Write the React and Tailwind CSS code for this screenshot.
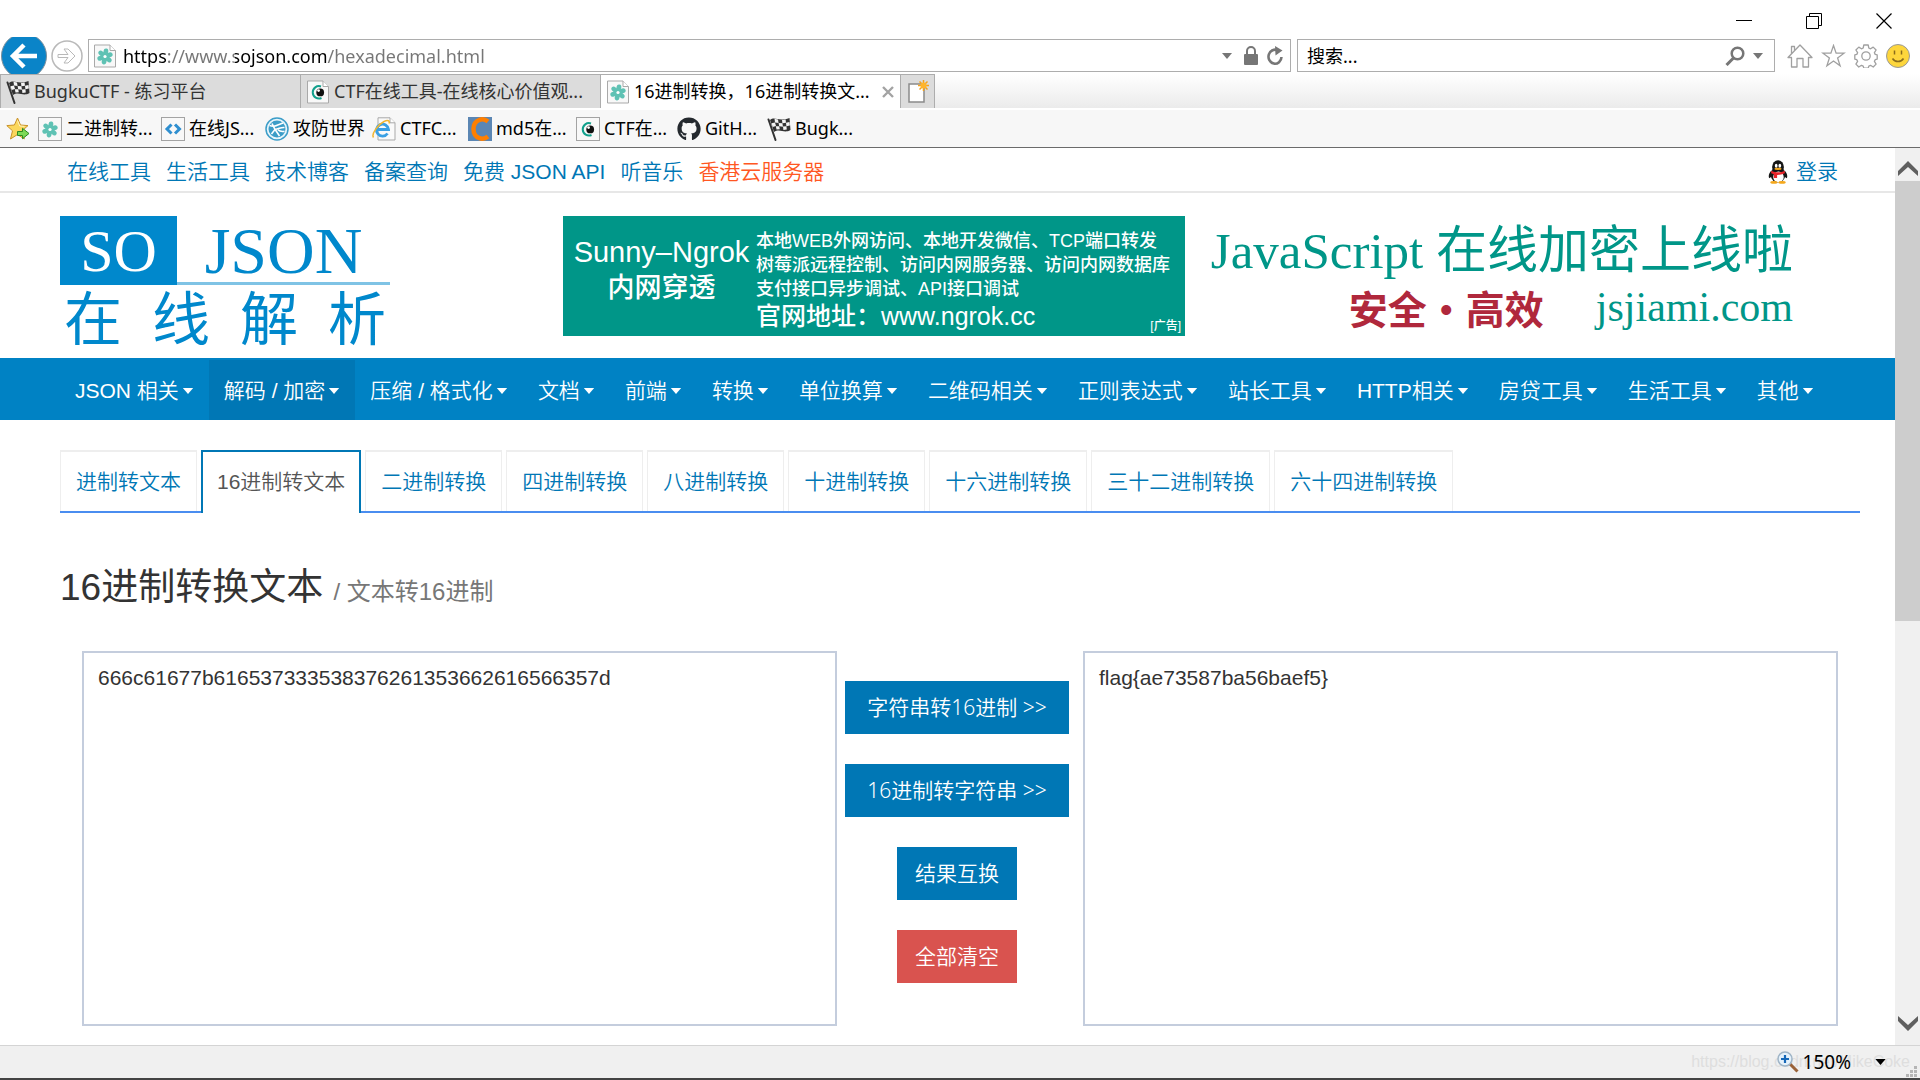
import React from "react";
import { FaGithub } from "react-icons/fa";

const UI = "font-['Noto_Sans','Noto_Sans_CJK_SC',sans-serif]";
const ARIAL = "font-['Liberation_Sans','Noto_Sans_CJK_SC',sans-serif] font-[350]";

/* ---------- icons ---------- */

function Flower() {
  return (
    <g>
      {[10, 70, 130, 190, 250, 310].map((a) => (
        <ellipse key={a} cx="12" cy="7.4" rx="2.4" ry="2.9" fill="#5fc2b4" transform={`rotate(${a} 12 12.5)`} />
      ))}
      <circle cx="12" cy="12.5" r="4.6" fill="#5fc2b4" />
      <circle cx="12" cy="12.5" r="1.6" fill="#fff" />
    </g>
  );
}

function Eye() {
  return (
    <g>
      <path d="M15 6.5A6.2 6.2 0 1 0 15.5 18" fill="none" stroke="#12a08c" strokeWidth="2" />
      <circle cx="14.2" cy="12.4" r="3.9" fill="#111" />
      <circle cx="12.6" cy="10.6" r="1.4" fill="#fff" />
    </g>
  );
}

function Chevrons() {
  return (
    <g fill="none" stroke="#2f8fd0" strokeWidth="3">
      <path d="M10.500 7.500 L6 12 L10.500 16.500" />
      <path d="M14 7.500 L18.500 12 L14 16.500" />
    </g>
  );
}

function DocIcon({ children }) {
  return (
    <svg viewBox="0 0 24 24" className="size-6 shrink-0" aria-hidden="true">
      <path d="M1.5 1H17l5.5 5.5V23h-21z" fill="#f8f8f8" stroke="#a9a9a9" />
      <path d="M17 1v5.5h5.5" fill="#fff" stroke="#a9a9a9" />
      {children}
    </svg>
  );
}

function BoxIcon({ children }) {
  return (
    <svg viewBox="0 0 24 24" className="size-6 shrink-0" aria-hidden="true">
      <rect x="0.5" y="0.5" width="23" height="23" fill="#f8f8f8" stroke="#a3a3a3" />
      {children}
    </svg>
  );
}

function FlagIcon() {
  return (
    <svg viewBox="0 0 24 24" className="size-6 shrink-0" aria-hidden="true">
      <path d="M1.500 2.500 L8.500 23" stroke="#333" strokeWidth="2" strokeLinecap="round" />
      <path d="M3 3 C8 -1 11 5 22.500 1 L23.500 13 C17 17 13 11 7 15 Z" fill="#333" />
      <path
        d="M7.500 1.800 l3.500 .8 .6 3.500 -3.600 -.6z M15 2.800 l3.600 -.3 .4 3.300 -3.600 .4z M4.500 6.200 l3.500 -.8 1 3.500 -3.400 1z M11.600 6 l3.800 .3 .6 3.400 -3.800 -.5z M19 5.800 l3.500 -.8 .4 3.400 -3.500 .8z M8.800 9 l3.400 .3 .6 3 -3.300 .2z M16 9.600 l3.400 -.4 .4 3.200 -3.400 .6z"
        fill="#f4f4f4"
      />
    </svg>
  );
}

function StarAdd() {
  return (
    <svg viewBox="0 0 24 24" className="size-6 shrink-0" aria-hidden="true">
      <path d="M11.500 1l3 7 7.500 .6-5.700 5 2 8.400-6.800-4.500L4.500 22l2-8.200L.8 8.600l7.600-.6z" fill="#fbd75c" stroke="#c9922a" strokeLinejoin="round" />
      <path d="M11.500 3.500l2.200 5.500 4.800 .4" fill="none" stroke="#fff2bd" />
      <path d="M11.500 14.500h5v-3.200l6.500 5.200-6.500 5.200v-3.200h-5z" fill="#7ed957" stroke="#2d8a22" strokeLinejoin="round" />
    </svg>
  );
}

function GlobeIcon() {
  return (
    <svg viewBox="0 0 24 24" className="size-6 shrink-0" aria-hidden="true">
      <circle cx="12" cy="12" r="11" fill="#e9f6fc" stroke="#3c9dc8" strokeWidth="1.500" />
      <circle cx="12" cy="12" r="8.500" fill="#3c9dc8" />
      <path d="M4.500 8.500C9 10 11 9 18 6M7 6.500l3 6-3.500 4.500M10 12.500c4-.5 6-2.500 9.500-2M10.500 13l4 6M13 12.800c2 2 4 2 6.500 1.500" fill="none" stroke="#fff" strokeWidth="1.600" />
    </svg>
  );
}

function IeIcon() {
  return (
    <svg viewBox="0 0 24 24" className="size-6 shrink-0" aria-hidden="true">
      <path d="M6 .8h12l5 5V23H6z" fill="#fafafa" stroke="#a9a9a9" />
      <path d="M18 .8v5h5" fill="#fff" stroke="#a9a9a9" />
      <path d="M15.500 16.500A6 6 0 1 1 16.500 12.500H5.500" fill="none" stroke="#3aa0e4" strokeWidth="2.800" />
      <path d="M1.500 20.500C-1 17 6 7.500 12 4.500c4-1.800 6-.8 5 2" fill="none" stroke="#f2b632" strokeWidth="1.500" />
    </svg>
  );
}

function CIcon() {
  return (
    <svg viewBox="0 0 24 24" className="size-6 shrink-0" aria-hidden="true">
      <rect width="24" height="24" fill="#5b86b3" />
      <path d="M20 4.500C17.500 2.500 14 2 11.500 2.800C3.500 5.500 3.500 18.500 11.500 21.200C14 22 17.500 21.500 20 19.500" fill="none" stroke="#ff7f00" strokeWidth="4.500" />
    </svg>
  );
}

function Penguin() {
  return (
    <svg viewBox="0 0 22 26" className="h-6 w-5" aria-hidden="true">
      <path d="M4 11C1 14 0 18 1.500 20L4 18M18 11c3 3 4 7 2.500 9L18 18" fill="#151515" />
      <ellipse cx="11" cy="16" rx="8" ry="8.500" fill="#151515" />
      <ellipse cx="11" cy="7.500" rx="6.500" ry="7.500" fill="#151515" />
      <ellipse cx="11.500" cy="18.500" rx="5.800" ry="6" fill="#fff" />
      <ellipse cx="9" cy="6" rx="1.500" ry="2.200" fill="#fff" />
      <ellipse cx="13" cy="6" rx="1.500" ry="2.200" fill="#fff" />
      <ellipse cx="11" cy="9.500" rx="4" ry="1.300" fill="#f5a81c" />
      <path d="M3.500 11.500c5 2.500 10 2.500 15 0v3c-3.500 1.500-6 1.800-8.500 1.700v3.300H6.500v-4L3.500 14.500z" fill="#e8262c" />
      <ellipse cx="6.500" cy="24.500" rx="4" ry="1.500" fill="#f5a81c" />
      <ellipse cx="15.500" cy="24.500" rx="4" ry="1.500" fill="#f5a81c" />
    </svg>
  );
}

function Triangle({ className }) {
  return (
    <svg viewBox="0 0 12 7" className={className} aria-hidden="true">
      <path d="M0 0h12L6 7z" fill="currentColor" />
    </svg>
  );
}

/* ---------- browser chrome ---------- */

function WindowButtons() {
  return (
    <div className="flex h-[37px] items-center justify-end gap-[54px] pt-1 pr-7">
      <button aria-label="最小化">
        <svg viewBox="0 0 16 16" className="size-4"><path d="M0 7.500h16" stroke="#000" /></svg>
      </button>
      <button aria-label="还原">
        <svg viewBox="0 0 16 16" className="size-4" fill="none" stroke="#000">
          <path d="M.5 3.500h12v12H.5zM3.500 3.500v-3h12v12h-3" />
        </svg>
      </button>
      <button aria-label="关闭">
        <svg viewBox="0 0 16 16" className="size-4"><path d="M.5 .5l15 15M15.500 .5l-15 15" stroke="#000" strokeWidth="1.200" /></svg>
      </button>
    </div>
  );
}

function AddressRow() {
  return (
    <div className="flex h-[37px] items-center overflow-hidden pr-2.5 pl-px">
      <button aria-label="后退" className="-my-1 shrink-0">
        <svg viewBox="0 0 46 46" className="size-[46px]">
          <circle cx="23" cy="23" r="22.500" fill="#0a84c8" stroke="#7d8f9b" />
          <path d="M36 23H13M23 12L12 23l11 11" fill="none" stroke="#fff" strokeWidth="4.500" />
        </svg>
      </button>
      <button aria-label="前进" className="ml-1 shrink-0">
        <svg viewBox="0 0 32 32" className="size-8" fill="none" stroke="#b9b9b9">
          <circle cx="16" cy="16" r="15" strokeWidth="1.500" />
          <path d="M7 14.500h10l-4-5.500h4l7 7-7 7h-4l4-5.500H7z" />
        </svg>
      </button>
      <div className="ml-[5px] flex h-[33px] min-w-0 flex-1 items-center border border-[#adadad] bg-white pr-1.5 pl-1 text-[#767676]">
        <DocIcon><Flower /></DocIcon>
        <input
          aria-label="地址"
          defaultValue="https://www.sojson.com/hexadecimal.html"
          className={`${UI} ml-1.5 h-[30px] min-w-0 flex-1 bg-[linear-gradient(to_right,#000_0_45px,#767676_45px_112px,#000_112px_204px,#767676_204px)] bg-clip-text text-[18px] text-transparent outline-none`}
        />
        <button aria-label="显示地址栏自动完成"><Triangle className="h-1.5 w-2.5" /></button>
        <svg viewBox="0 0 14 19" className="ml-3 h-[19px] w-3.5" aria-hidden="true">
          <path d="M3 9V5a4 4 0 0 1 8 0v4" fill="none" stroke="#767676" strokeWidth="2" />
          <rect y="8" width="14" height="11" rx="1" fill="#767676" />
        </svg>
        <button aria-label="刷新" className="ml-2">
          <svg viewBox="0 0 18 20" className="h-5 w-[18px]">
            <path d="M12 4.500A6.500 7 0 1 0 15.500 11" fill="none" stroke="#767676" strokeWidth="2.600" />
            <path d="M9 0l7.500 4.500L9.500 9.500z" fill="#767676" />
          </svg>
        </button>
      </div>
      <div className="ml-1.5 flex h-[33px] w-[478px] items-center border border-[#adadad] bg-white pr-[11px] pl-[9px] text-[#767676]">
        <input
          aria-label="搜索"
          placeholder="搜索..."
          className={`${UI} h-[30px] min-w-0 flex-1 text-[18px] placeholder:text-black outline-none`}
        />
        <button aria-label="开始搜索">
          <svg viewBox="0 0 20 20" className="size-5" fill="none" stroke="#767676">
            <circle cx="12.500" cy="7.500" r="5.800" strokeWidth="2.500" />
            <path d="M8.500 12L1.500 19" strokeWidth="3" />
          </svg>
        </button>
        <button aria-label="搜索选项" className="ml-2"><Triangle className="h-1.5 w-2.5" /></button>
      </div>
      <div className="ml-3 flex items-center gap-2 pt-px">
        <button aria-label="主页">
          <svg viewBox="0 0 26 24" className="h-6 w-[26px]" fill="#fff" stroke="#a0a0a0" strokeWidth="1.300" strokeLinejoin="round">
            <path d="M1 13.500L13 1l12 12.500h-3.500V23h-5.500v-8.500h-6V23H4.500v-9.500zM4.500 9.500V2.500h3v4" />
          </svg>
        </button>
        <button aria-label="收藏">
          <svg viewBox="0 0 25 24" className="h-6 w-[25px]" fill="#fff" stroke="#a0a0a0" strokeWidth="1.300">
            <path d="M12.500 1.500l2.600 7.700h8l-6.500 4.800 2.500 7.800-6.600-4.800-6.600 4.800 2.500-7.800L1.900 9.200h8z" />
          </svg>
        </button>
        <button aria-label="工具">
          <svg viewBox="0 0 24 24" className="size-6" fill="#fff" stroke="#a0a0a0" strokeWidth="1.300" strokeLinejoin="round">
            <path d="M9.800 1h4.400l.6 3 1.700 .8 2.700-1.700 2.900 2.900-1.700 2.700 .8 1.700 2 .5v4.200l-2 .6-.8 1.700 1.700 2.700-2.900 2.900-2.700-1.700-1.700 .8-.6 2H9.800l-.6-2-1.700-.8-2.700 1.700-2.900-2.900 1.700-2.700-.8-1.700-2-.6v-4.200l2-.5 .8-1.700L1.900 6l2.900-2.900 2.700 1.700 1.700-.8z" />
            <circle cx="12" cy="12" r="4.200" />
          </svg>
        </button>
        <button aria-label="反馈">
          <svg viewBox="0 0 24 24" className="size-6">
            <circle cx="12" cy="12" r="11.500" fill="#fdd63c" stroke="#999" />
            <path d="M8.500 6.500v4M15.500 6.500v4M6.500 14.500c2.500 4 8.500 4 11 0" fill="none" stroke="#8a6d1c" strokeWidth="1.500" />
          </svg>
        </button>
      </div>
    </div>
  );
}

function TabRow() {
  const tab = "flex w-[300px] items-center gap-1 overflow-hidden border-t border-l border-[#adadad] whitespace-nowrap";
  return (
    <div className={`${UI} flex h-[36px] border-b-2 border-white bg-linear-to-b from-white to-[#ebebeb] text-[18px]`} role="tablist">
      <button role="tab" className={`${tab} bg-[#dcdcdc] pl-[5px] text-[#333]`}>
        <FlagIcon />
        <span>BugkuCTF - 练习平台</span>
      </button>
      <button role="tab" className={`${tab} bg-[#dcdcdc] pl-[5px] text-[#333]`}>
        <DocIcon><Eye /></DocIcon>
        <span>CTF在线工具-在线核心价值观...</span>
      </button>
      <div role="tab" aria-selected="true" className={`${tab} bg-white pl-[5px] text-black`}>
        <DocIcon><Flower /></DocIcon>
        <span>16进制转换，16进制转换文...</span>
        <button aria-label="关闭选项卡" className="ml-auto pr-1.5">
          <svg viewBox="0 0 12 12" className="size-3"><path d="M1 1l10 10M11 1L1 11" stroke="#a3a3a3" strokeWidth="2.400" /></svg>
        </button>
      </div>
      <button aria-label="新建选项卡" className="flex w-[35px] items-center justify-center border-x border-t border-[#adadad] bg-[#dcdcdc]">
        <svg viewBox="0 0 22 24" className="h-6 w-[22px]">
          <rect x="2" y="4" width="15" height="18" fill="#fff" stroke="#8a8a8a" strokeWidth="1.500" />
          <path d="M16.500 0v11M11 5.500h11M12.500 1.500l8 8M20.500 1.500l-8 8" stroke="#f5a21a" strokeWidth="1.500" />
          <circle cx="16.500" cy="5.500" r="3" fill="#ffb52b" />
        </svg>
      </button>
    </div>
  );
}

const favorites = [
  { label: "二进制转...", w: "w-[123px]", icon: <BoxIcon><Flower /></BoxIcon> },
  { label: "在线JS...", w: "w-[104px]", icon: <BoxIcon><Chevrons /></BoxIcon> },
  { label: "攻防世界", w: "w-[107px]", icon: <GlobeIcon /> },
  { label: "CTFC...", w: "w-[96px]", icon: <IeIcon /> },
  { label: "md5在...", w: "w-[108px]", icon: <CIcon /> },
  { label: "CTF在...", w: "w-[101px]", icon: <BoxIcon><Eye /></BoxIcon> },
  { label: "GitH...", w: "w-[90px]", icon: <FaGithub className="size-6 shrink-0 text-[#24292e]" /> },
  { label: "Bugk...", w: "w-[90px]", icon: <FlagIcon /> },
];

function FavoritesBar() {
  return (
    <div className={`${UI} flex h-[38px] items-center border-b border-[#6b6b6b] bg-[#f7f7f7] pl-1.5 text-[18px] text-black`}>
      <button aria-label="添加到收藏夹栏" className="mr-2"><StarAdd /></button>
      {favorites.map((f) => (
        <a key={f.label} href="#" className={`${f.w} flex items-center gap-1 whitespace-nowrap`}>
          {f.icon}
          <span>{f.label}</span>
        </a>
      ))}
    </div>
  );
}

/* ---------- site ---------- */

const topLinks = ["在线工具", "生活工具", "技术博客", "备案查询", "免费 JSON API", "听音乐"];

function TopBar() {
  return (
    <div className="flex h-[45px] items-center gap-[15px] border-b-2 border-[#e7e7e7] pt-1 pr-[57px] pl-[67px] text-[21px] text-[#0077b5]">
      {topLinks.map((t) => (
        <a key={t} href="#">{t}</a>
      ))}
      <a href="#" className="text-[#ff5722]">香港云服务器</a>
      <a href="#" className="ml-auto flex items-center gap-2"><Penguin />登录</a>
    </div>
  );
}

function Logo() {
  return (
    <a href="#" aria-label="SO JSON 在线解析" className="block w-[330px] font-normal text-[#0088cc]">
      <div className="flex h-[69px] font-['Liberation_Serif',serif]">
        <div className="flex w-[117px] items-center justify-center bg-[#0088cc] text-[60px] leading-none text-white">SO</div>
        <div className="flex flex-1 items-center justify-center border-b-3 border-[#7fc3e5] pt-1 text-[66px] leading-none">JSON</div>
      </div>
      <div className="flex justify-between px-1 font-['Noto_Sans_CJK_SC',sans-serif] text-[58px] leading-[60px]">
        <span>在</span><span>线</span><span>解</span><span>析</span>
      </div>
    </a>
  );
}

function NgrokAd() {
  return (
    <a href="#" className="relative flex h-[120px] w-[622px] bg-[#009688] font-['Liberation_Sans','Noto_Sans_CJK_SC',sans-serif] font-medium whitespace-nowrap text-white">
      <div className="flex w-[193px] flex-col items-center pt-[18px] pl-1">
        <span className="text-[29px] leading-[36px]">Sunny–Ngrok</span>
        <span className="text-[27px] leading-[36px]">内网穿透</span>
      </div>
      <div className="flex flex-col pt-[13px] text-[18px] leading-[24px]">
        <span>本地WEB外网访问、本地开发微信、TCP端口转发</span>
        <span>树莓派远程控制、访问内网服务器、访问内网数据库</span>
        <span>支付接口异步调试、API接口调试</span>
        <span className="text-[25px] leading-[30px]">官网地址：www.ngrok.cc</span>
      </div>
      <span className="absolute right-1 bottom-0.5 text-[12px] leading-4">[广告]</span>
    </a>
  );
}

function JsAd() {
  return (
    <a href="#" className="ml-[25px] flex h-[120px] w-[583px] flex-col font-['Liberation_Serif','Noto_Sans_CJK_SC',serif] font-normal whitespace-nowrap text-[#009688]">
      <span className="text-right text-[51px] leading-[70px]">JavaScript 在线加密上线啦</span>
      <span className="flex items-center justify-end gap-[52px] leading-[42px]">
        <span className="font-['Noto_Sans_CJK_SC',sans-serif] text-[39px] font-bold text-[#b0283c]">安全·高效</span>
        <span className="text-[42px]">jsjiami.com</span>
      </span>
    </a>
  );
}

const navItems = [
  "JSON 相关", "解码 / 加密", "压缩 / 格式化", "文档", "前端", "转换", "单位换算",
  "二维码相关", "正则表达式", "站长工具", "HTTP相关", "房贷工具", "生活工具", "其他",
];

function Nav() {
  return (
    <nav className="flex h-[62px] bg-[#0082c4] pt-0.5 pl-[60px] text-[21px] text-white">
      {navItems.map((t, i) => (
        <button
          key={t}
          className={`flex items-center gap-[3px] px-[15px] pt-0.5 whitespace-nowrap ${i === 1 ? "bg-[#0077b5]" : ""}`}
        >
          {t}
          <Triangle className="h-1.5 w-3" />
        </button>
      ))}
    </nav>
  );
}

const converters = [
  "进制转文本", "16进制转文本", "二进制转换", "四进制转换", "八进制转换",
  "十进制转换", "十六进制转换", "三十二进制转换", "六十四进制转换",
];

function ConverterTabs() {
  return (
    <div className="mt-[30px] flex gap-1 border-b-2 border-[#4a8df0] text-[21px]">
      {converters.map((t, i) => (
        <a
          key={t}
          href="#"
          className={`flex items-center whitespace-nowrap ${
            i === 1
              ? "-mb-0.5 h-[63px] border-x-2 border-t-2 border-[#0077b5] bg-white px-3.5 pb-0.5 text-[#555]"
              : "h-[61px] border-x border-t-2 border-[#eee] px-[15px] text-[#0077b5]"
          }`}
        >
          {t}
        </a>
      ))}
    </div>
  );
}

function Converter() {
  const area = "h-[375px] min-w-0 flex-1 resize-none border-2 border-[#c4cddd] px-3.5 py-2.5 text-[21px] leading-[30px] text-[#333] outline-none";
  const button = "flex h-[53px] items-center px-[18px] text-[21px] whitespace-nowrap text-white";
  return (
    <div className="mt-9 flex px-[22px]">
      <textarea aria-label="输入" className={area} defaultValue="666c61677b616537333538376261353662616566357d" />
      <div className={`${UI} flex w-[246px] flex-col items-center gap-[30px] pt-[30px] pr-3.5 pl-2`}>
        <button className={`${button} w-full justify-center bg-[#0077b5]`}>字符串转16进制 &gt;&gt;</button>
        <button className={`${button} w-full justify-center bg-[#0077b5]`}>16进制转字符串 &gt;&gt;</button>
        <button className={`${button} bg-[#0077b5]`}>结果互换</button>
        <button className={`${button} bg-[#d9534f]`}>全部清空</button>
      </div>
      <textarea aria-label="结果" className={area} defaultValue="flag{ae73587ba56baef5}" />
    </div>
  );
}

function Scrollbar() {
  return (
    <div className="flex w-[25px] shrink-0 flex-col bg-[#f0f0f0]">
      <button aria-label="向上滚动" className="flex h-[33px] items-end justify-center pb-1">
        <svg viewBox="0 0 20 16" className="h-4 w-5"><path d="M0 15V10L10 0l10 10v5L10 6z" fill="#5f5f5f" /></svg>
      </button>
      <div className="flex-[441] bg-[#cdcdcd]" />
      <div className="flex-[394]" />
      <button aria-label="向下滚动" className="flex h-[30px] items-start justify-center">
        <svg viewBox="0 0 20 16" className="h-4 w-5"><path d="M0 1v5l10 10L20 6V1L10 10z" fill="#5f5f5f" /></svg>
      </button>
    </div>
  );
}

function StatusBar() {
  return (
    <footer className={`${UI} relative flex h-[35px] items-center justify-end border-t border-b-2 border-t-[#d4d4d4] border-b-[#444] bg-[#f0f0f0] text-black`}>
      <span className="absolute right-2.5 font-['Liberation_Sans',sans-serif] text-[16px] whitespace-nowrap text-[#dedede]">https://blog.csdn.net/MikeCoke</span>
      <button className="relative flex items-center gap-1 pr-[34px] text-[19px]">
        <svg viewBox="0 0 22 22" className="size-[22px]" aria-hidden="true">
          <path d="M13 13l7.500 7.500" stroke="#9a6238" strokeWidth="3" />
          <circle cx="8" cy="8" r="7" fill="#e4f1fb" stroke="#9fb4c6" strokeWidth="1.500" />
          <path d="M8 4v8M4 8h8" stroke="#1768b8" strokeWidth="2.200" />
        </svg>
        150%
        <Triangle className="ml-5 h-1.5 w-[11px]" />
      </button>
      <svg viewBox="0 0 12 12" className="absolute right-0.5 bottom-0 size-3" fill="#b5b5b5" aria-hidden="true">
        <path d="M8 0h3v3H8zM4 4h3v3H4zM8 4h3v3H8zM0 8h3v3H0zM4 8h3v3H4zM8 8h3v3H8z" />
      </svg>
    </footer>
  );
}

export default function App() {
  return (
    <div className="flex min-h-screen flex-col bg-white">
      <header>
        <WindowButtons />
        <AddressRow />
        <TabRow />
        <FavoritesBar />
      </header>
      <div className="flex flex-1">
        <main className={`${ARIAL} min-w-0 flex-1`}>
          <TopBar />
          <div className="flex h-[165px] items-start pt-[23px] pr-[102px] pl-[60px]">
            <Logo />
            <div className="ml-auto flex"><NgrokAd /><JsAd /></div>
          </div>
          <Nav />
          <div className="pr-[35px] pl-[60px]">
            <ConverterTabs />
            <h1 className="mt-[52px] text-[37px] leading-[46px] font-normal text-[#333]">
              16进制转换文本 <small className="text-[24px] text-[#777]">/ 文本转16进制</small>
            </h1>
            <Converter />
          </div>
        </main>
        <Scrollbar />
      </div>
      <StatusBar />
    </div>
  );
}
